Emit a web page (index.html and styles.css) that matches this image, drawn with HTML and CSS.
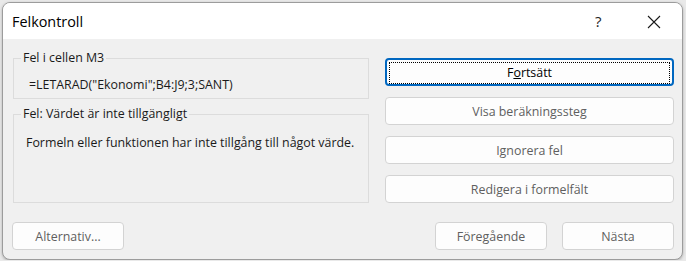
FILE: index.html
```html
<!DOCTYPE html>
<html>
	<head>
		<meta charset=utf-8>
		<title>Felkontroll</title>
		<link rel="stylesheet" href="styles.css">
	</head>
	<body>
		<div class="window">
			<div class="titlebar">
				<span class="title">Felkontroll</span>
				<span class="help">?</span>
				<span class="close">
					<svg width="14" height="14" viewBox="0 0 14 14"><path d="M1 1 L13 13 M13 1 L1 13" stroke="#1a1a1a" stroke-width="1.1" fill="none"/></svg>
				</span>
			</div>
			<div class="content">
				<div class="main">
					<div class="groups">
						<fieldset class="group cell">
							<legend>Fel i cellen M3</legend>
							<div class="formula">=LETARAD("Ekonomi";B4:J9;3;SANT)</div>
						</fieldset>
						<fieldset class="group error">
							<legend>Fel: Värdet är inte tillgängligt</legend>
							<div class="message">Formeln eller funktionen har inte tillgång till något värde.</div>
						</fieldset>
					</div>
					<div class="actions">
						<button type="button" class="btn default"><span class="focus">F<u>o</u>rtsätt</span></button>
						<button type="button" class="btn">Visa beräkningssteg</button>
						<button type="button" class="btn">Ignorera fel</button>
						<button type="button" class="btn">Redigera i formelfält</button>
					</div>
				</div>
				<div class="footer">
					<button type="button" class="btn small">Alternativ...</button>
					<div class="nav">
						<button type="button" class="btn small">Föregående</button>
						<button type="button" class="btn small">Nästa</button>
					</div>
				</div>
			</div>
		</div>
	</body>
</html>
```
FILE: styles.css
```css
body {
	margin: 0;
	background-color: #e9e9e9;
	font: 12.4px "Open Sans", sans-serif;
	color: #1a1a1a;
}
.window {
	margin: 2px 3px 0 2px;
	height: 256px;
	border: 1px solid #9c9c9c;
	border-radius: 8px;
	overflow: hidden;
	background-color: #f0f0f0;
	box-shadow: 0 1px 3px rgba(0,0,0,0.25);
}
.titlebar {
	display: flex;
	align-items: center;
	height: 36px;
	padding-left: 9px;
	background-color: #fff;
}
.title {
	flex: 1;
	font-size: 14.4px;
	color: #000;
}
.help {
	width: 52px;
	font-size: 15px;
	color: #222;
}
.close {
	width: 35px;
	display: flex;
	padding-top: 2px;
}
.content {
	padding: 11px 8px 0 9px;
}
.main {
	display: flex;
	justify-content: space-between;
}
.groups {
	width: 356px;
	margin-left: 1px;
}
.group {
	box-sizing: border-box;
	margin: 0;
	border: 1px solid #dcdcdc;
	padding: 0 0 0 12px;
}
.group legend {
	padding: 0 2px;
	margin-left: -5px;
	line-height: 16px;
}
.cell {
	height: 49px;
}
.formula {
	padding-top: 10px;
	padding-left: 3px;
}
.error {
	height: 97px;
	margin-top: 7px;
}
.message {
	padding-top: 12px;
	padding-left: 0;
}
.actions {
	width: 289px;
	display: flex;
	flex-direction: column;
	gap: 11px;
	padding-top: 8px;
}
.btn {
	height: 28px;
	border: 1px solid #d3d3d3;
	border-radius: 4px;
	background-color: #fdfdfd;
	font: 12.4px "Open Sans", sans-serif;
	color: #5f5f5f;
	padding: 0;
}
.btn.default {
	border: 2px solid #0067c0;
	color: #000;
	padding: 2px;
}
.focus {
	display: block;
	height: 100%;
	border: 1px dotted #000;
	line-height: 20px;
}
.footer {
	display: flex;
	justify-content: space-between;
	padding-top: 19px;
}
.nav {
	display: flex;
	gap: 15px;
}
.small {
	width: 112px;
}
```
